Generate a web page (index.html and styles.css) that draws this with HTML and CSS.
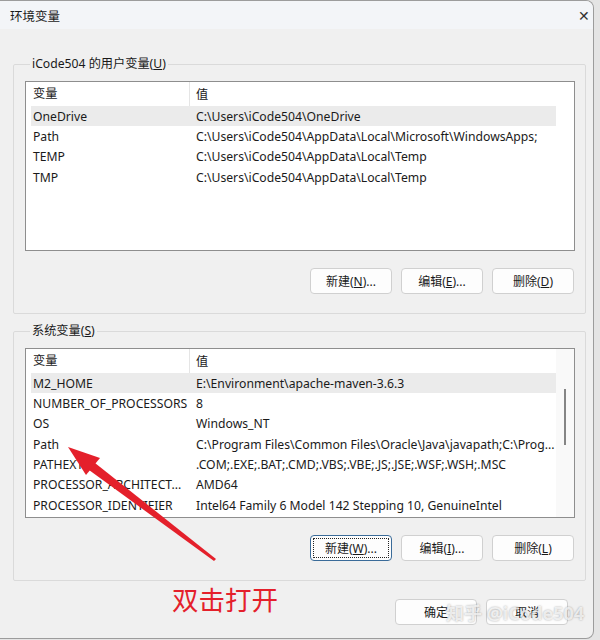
FILE: index.html
```html
<!DOCTYPE html>
<html lang="zh-CN">
<head>
    <meta charset="UTF-8">
    <meta name="viewport" content="width=device-width, initial-scale=1.0">
    <title>环境变量</title>
    <link rel="stylesheet" href="styles.css">
</head>
<body>
    <div class="window">
        <div class="title-bar">
            <span class="title">环境变量</span>
            <span class="close">&#x2715;</span>
        </div>
        <div class="content">
            <!-- 用户变量 -->
            <fieldset class="group">
                <legend>iCode504 的用户变量(<u>U</u>)</legend>
                <div class="list">
                    <div class="list-main">
                        <div class="list-head">
                            <span class="col1">变量</span>
                            <span class="col2">值</span>
                        </div>
                        <div class="row selected"><span class="col1">OneDrive</span><span class="col2">C:\Users\iCode504\OneDrive</span></div>
                        <div class="row"><span class="col1">Path</span><span class="col2">C:\Users\iCode504\AppData\Local\Microsoft\WindowsApps;</span></div>
                        <div class="row"><span class="col1">TEMP</span><span class="col2">C:\Users\iCode504\AppData\Local\Temp</span></div>
                        <div class="row"><span class="col1">TMP</span><span class="col2">C:\Users\iCode504\AppData\Local\Temp</span></div>
                    </div>
                    <div class="list-side"></div>
                </div>
                <div class="btn-row">
                    <button class="btn">新建(<u>N</u>)...</button>
                    <button class="btn">编辑(<u>E</u>)...</button>
                    <button class="btn">删除(<u>D</u>)</button>
                </div>
            </fieldset>
            <!-- 系统变量 -->
            <fieldset class="group">
                <legend>系统变量(<u>S</u>)</legend>
                <div class="list">
                    <div class="list-main">
                        <div class="list-head">
                            <span class="col1">变量</span>
                            <span class="col2">值</span>
                        </div>
                        <div class="row selected"><span class="col1">M2_HOME</span><span class="col2">E:\Environment\apache-maven-3.6.3</span></div>
                        <div class="row"><span class="col1">NUMBER_OF_PROCESSORS</span><span class="col2">8</span></div>
                        <div class="row"><span class="col1">OS</span><span class="col2">Windows_NT</span></div>
                        <div class="row"><span class="col1">Path</span><span class="col2">C:\Program Files\Common Files\Oracle\Java\javapath;C:\Prog...</span></div>
                        <div class="row"><span class="col1">PATHEXT</span><span class="col2">.COM;.EXE;.BAT;.CMD;.VBS;.VBE;.JS;.JSE;.WSF;.WSH;.MSC</span></div>
                        <div class="row"><span class="col1">PROCESSOR_ARCHITECT...</span><span class="col2">AMD64</span></div>
                        <div class="row"><span class="col1">PROCESSOR_IDENTIFIER</span><span class="col2">Intel64 Family 6 Model 142 Stepping 10, GenuineIntel</span></div>
                    </div>
                    <div class="list-side scroll">
                        <div class="thumb"></div>
                    </div>
                </div>
                <div class="btn-row">
                    <button class="btn focus">新建(<u>W</u>)...</button>
                    <button class="btn">编辑(<u>I</u>)...</button>
                    <button class="btn">删除(<u>L</u>)</button>
                </div>
            </fieldset>
            <div class="footer">
                <button class="btn">确定</button>
                <button class="btn">取消</button>
            </div>
        </div>

        <!-- 标注 -->
        <svg class="arrow" width="594" height="640" viewBox="0 0 594 640">
            <polygon points="214,561 216,559 95,463 89,470" fill="#e4202b"/>
            <polygon points="68,447 100,458 86,475" fill="#e4202b"/>
        </svg>
        <div class="note">双击打开</div>
        <div class="watermark">知乎 @iCode504</div>
    </div>
</body>
</html>
```

FILE: styles.css
```css
*{
    box-sizing: border-box;
}
body{
    margin: 0;
    background-color: #e4e4e4;
    font-family: "Noto Sans", "Noto Sans CJK SC", sans-serif;
    font-size: 12.2px;
    color: #1a1a1a;
}
.window{
    position: relative;
    width: 594px;
    height: 639px;
    background-color: #f0f0f0;
    border: 1px solid #9c9c9c;
    border-left: none;
    border-radius: 0 8px 8px 0;
    overflow: hidden;
}
.title-bar{
    display: flex;
    align-items: center;
    justify-content: space-between;
    height: 28px;
    padding: 0 3px 0 10px;
    background-color: #f3f5f8;
}
.title{
    font-size: 12.5px;
}
.close{
    font-size: 14px;
    color: #333;
}
.content{
    padding: 28px 7px 0 13px;
}
.group{
    margin: 0 0 10px 0;
    padding: 10px 10px 19px 11px;
    border: 1px solid #dadada;
    border-radius: 2px;
}
.group legend{
    margin-left: 5px;
    padding: 0 2px;
    line-height: 14px;
}
.list{
    display: flex;
    height: 170px;
    background-color: #fff;
    border: 1px solid #8e8e8e;
    padding-left: 5px;
}
.list-main{
    width: 525px;
}
.list-side{
    flex: 1;
}
.scroll{
    position: relative;
    background-color: #f9f9f9;
}
.thumb{
    position: absolute;
    left: 8px;
    top: 40px;
    width: 2px;
    height: 56px;
    background-color: #858585;
}
.list-head{
    display: flex;
    height: 24px;
    align-items: center;
}
.list-head .col1{
    border-right: 1px solid #e5e5e5;
    height: 24px;
    line-height: 24px;
}
.row{
    display: flex;
    height: 20.33px;
    align-items: center;
}
.col1{
    width: 159px;
    padding-left: 2px;
    white-space: nowrap;
}
.col2{
    padding-left: 6px;
    white-space: nowrap;
}
.selected{
    background-color: #ebebeb;
}
.btn-row{
    display: flex;
    justify-content: flex-end;
    gap: 9px;
    margin-top: 17px;
    padding-right: 1px;
}
.btn{
    width: 82px;
    height: 26px;
    padding: 0;
    font-family: inherit;
    font-size: 12px;
    color: #1a1a1a;
    background-color: #fdfdfd;
    border: 1px solid #d0d0d0;
    border-radius: 4px;
}
.focus{
    border-color: #3a6b99;
    outline: 1px dotted #222;
    outline-offset: -4px;
}
.footer{
    display: flex;
    justify-content: flex-end;
    gap: 9px;
    margin-top: 18px;
    padding-right: 18px;
}
.arrow{
    position: absolute;
    left: 0;
    top: -1px;
}
.note{
    position: absolute;
    left: 172px;
    top: 578px;
    font-size: 26.5px;
    color: #e4202b;
}
.watermark{
    position: absolute;
    left: 446px;
    top: 598px;
    font-size: 18px;
    font-weight: bold;
    color: rgba(255,255,255,0.75);
    text-shadow: 0 0 2px rgba(0,0,0,0.35);
}
```
